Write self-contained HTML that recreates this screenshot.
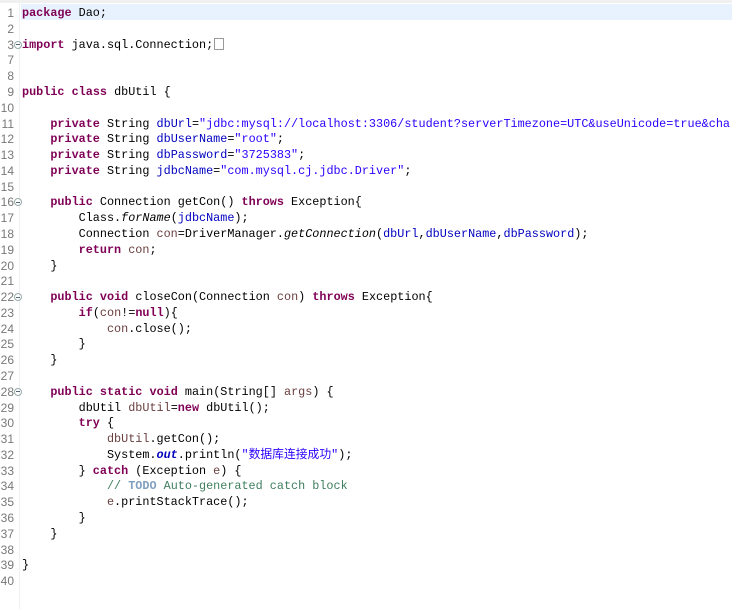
<!DOCTYPE html>
<html><head><meta charset="utf-8">
<style>
html,body{margin:0;padding:0;background:#fff;width:732px;height:609px;overflow:hidden;position:relative}
.top{position:absolute;left:0;top:0;width:732px;height:3px;background:#f0f0f0}
.gl{position:absolute;left:19px;top:3px;width:1px;height:606px;background:#eef0f2}
.hl{position:absolute;left:21px;top:4px;width:711px;height:16px;background:#e8f2fe}
.r{position:absolute;left:0;width:732px;overflow:hidden;height:16px;line-height:16px;white-space:pre;font-family:"Liberation Mono","Noto Sans CJK SC",monospace;font-size:11.8px;color:#000;margin-top:1px}
.n{position:absolute;left:-6px;width:20px;text-align:right;color:#787878;font-family:"Liberation Sans",sans-serif;font-size:12px}
.c{position:absolute;left:22px}
.f{position:absolute;left:14px;top:4px;width:6px;height:6px;border:1px solid #9aa;border-radius:50%;font-size:0}
.f::after{content:"";position:absolute;left:1px;top:2.5px;width:4px;height:1px;background:#567}
.k{color:#7f0055;font-weight:bold}
.s{color:#2a00ff}
.v{color:#0000c0}
.o{color:#0000c0;font-style:italic;font-weight:bold}
.i{font-style:italic}
.m{color:#3f7f5f}
.t{color:#7f9fbf;font-weight:bold}
.lv{color:#6a3e3e}
.box{display:inline-block;width:8px;height:10px;border:1px solid #999;vertical-align:-2px;margin-left:1px}
</style></head><body>
<div class="top"></div><div class="gl"></div><div class="hl"></div>
<div class="r" style="top:4px"><span class="n">1</span><span class="c"><span class="k">package</span> Dao;</span></div>
<div class="r" style="top:19.8px"><span class="n">2</span></div>
<div class="r" style="top:35.6px"><span class="n">3</span><span class="f"></span><span class="c"><span class="k">import</span> java.sql.Connection;<span class="box"></span></span></div>
<div class="r" style="top:51.3px"><span class="n">7</span></div>
<div class="r" style="top:67.1px"><span class="n">8</span></div>
<div class="r" style="top:82.9px"><span class="n">9</span><span class="c"><span class="k">public</span> <span class="k">class</span> dbUtil {</span></div>
<div class="r" style="top:98.7px"><span class="n">10</span></div>
<div class="r" style="top:114.5px"><span class="n">11</span><span class="c">    <span class="k">private</span> String <span class="v">dbUrl</span>=<span class="s">"jdbc:mysql://localhost:3306/student?serverTimezone=UTC&amp;useUnicode=true&amp;cha</span></span></div>
<div class="r" style="top:130.3px"><span class="n">12</span><span class="c">    <span class="k">private</span> String <span class="v">dbUserName</span>=<span class="s">"root"</span>;</span></div>
<div class="r" style="top:146px"><span class="n">13</span><span class="c">    <span class="k">private</span> String <span class="v">dbPassword</span>=<span class="s">"3725383"</span>;</span></div>
<div class="r" style="top:161.8px"><span class="n">14</span><span class="c">    <span class="k">private</span> String <span class="v">jdbcName</span>=<span class="s">"com.mysql.cj.jdbc.Driver"</span>;</span></div>
<div class="r" style="top:177.6px"><span class="n">15</span></div>
<div class="r" style="top:193.4px"><span class="n">16</span><span class="f"></span><span class="c">    <span class="k">public</span> Connection getCon() <span class="k">throws</span> Exception{</span></div>
<div class="r" style="top:209.2px"><span class="n">17</span><span class="c">        Class.<span class="i">forName</span>(<span class="v">jdbcName</span>);</span></div>
<div class="r" style="top:224.9px"><span class="n">18</span><span class="c">        Connection <span class="lv">con</span>=DriverManager.<span class="i">getConnection</span>(<span class="v">dbUrl</span>,<span class="v">dbUserName</span>,<span class="v">dbPassword</span>);</span></div>
<div class="r" style="top:240.7px"><span class="n">19</span><span class="c">        <span class="k">return</span> <span class="lv">con</span>;</span></div>
<div class="r" style="top:256.5px"><span class="n">20</span><span class="c">    }</span></div>
<div class="r" style="top:272.3px"><span class="n">21</span></div>
<div class="r" style="top:288.1px"><span class="n">22</span><span class="f"></span><span class="c">    <span class="k">public</span> <span class="k">void</span> closeCon(Connection <span class="lv">con</span>) <span class="k">throws</span> Exception{</span></div>
<div class="r" style="top:303.8px"><span class="n">23</span><span class="c">        <span class="k">if</span>(<span class="lv">con</span>!=<span class="k">null</span>){</span></div>
<div class="r" style="top:319.6px"><span class="n">24</span><span class="c">            <span class="lv">con</span>.close();</span></div>
<div class="r" style="top:335.4px"><span class="n">25</span><span class="c">        }</span></div>
<div class="r" style="top:351.2px"><span class="n">26</span><span class="c">    }</span></div>
<div class="r" style="top:367px"><span class="n">27</span></div>
<div class="r" style="top:382.8px"><span class="n">28</span><span class="f"></span><span class="c">    <span class="k">public</span> <span class="k">static</span> <span class="k">void</span> main(String[] <span class="lv">args</span>) {</span></div>
<div class="r" style="top:398.5px"><span class="n">29</span><span class="c">        dbUtil <span class="lv">dbUtil</span>=<span class="k">new</span> dbUtil();</span></div>
<div class="r" style="top:414.3px"><span class="n">30</span><span class="c">        <span class="k">try</span> {</span></div>
<div class="r" style="top:430.1px"><span class="n">31</span><span class="c">            <span class="lv">dbUtil</span>.getCon();</span></div>
<div class="r" style="top:445.9px"><span class="n">32</span><span class="c">            System.<span class="o">out</span>.println(<span class="s">"数据库连接成功"</span>);</span></div>
<div class="r" style="top:461.7px"><span class="n">33</span><span class="c">        } <span class="k">catch</span> (Exception <span class="lv">e</span>) {</span></div>
<div class="r" style="top:477.4px"><span class="n">34</span><span class="c">            <span class="m">// </span><span class="t">TODO</span><span class="m"> Auto-generated catch block</span></span></div>
<div class="r" style="top:493.2px"><span class="n">35</span><span class="c">            <span class="lv">e</span>.printStackTrace();</span></div>
<div class="r" style="top:509px"><span class="n">36</span><span class="c">        }</span></div>
<div class="r" style="top:524.8px"><span class="n">37</span><span class="c">    }</span></div>
<div class="r" style="top:540.6px"><span class="n">38</span></div>
<div class="r" style="top:556.3px"><span class="n">39</span><span class="c">}</span></div>
<div class="r" style="top:572.1px"><span class="n">40</span></div>
</body></html>
